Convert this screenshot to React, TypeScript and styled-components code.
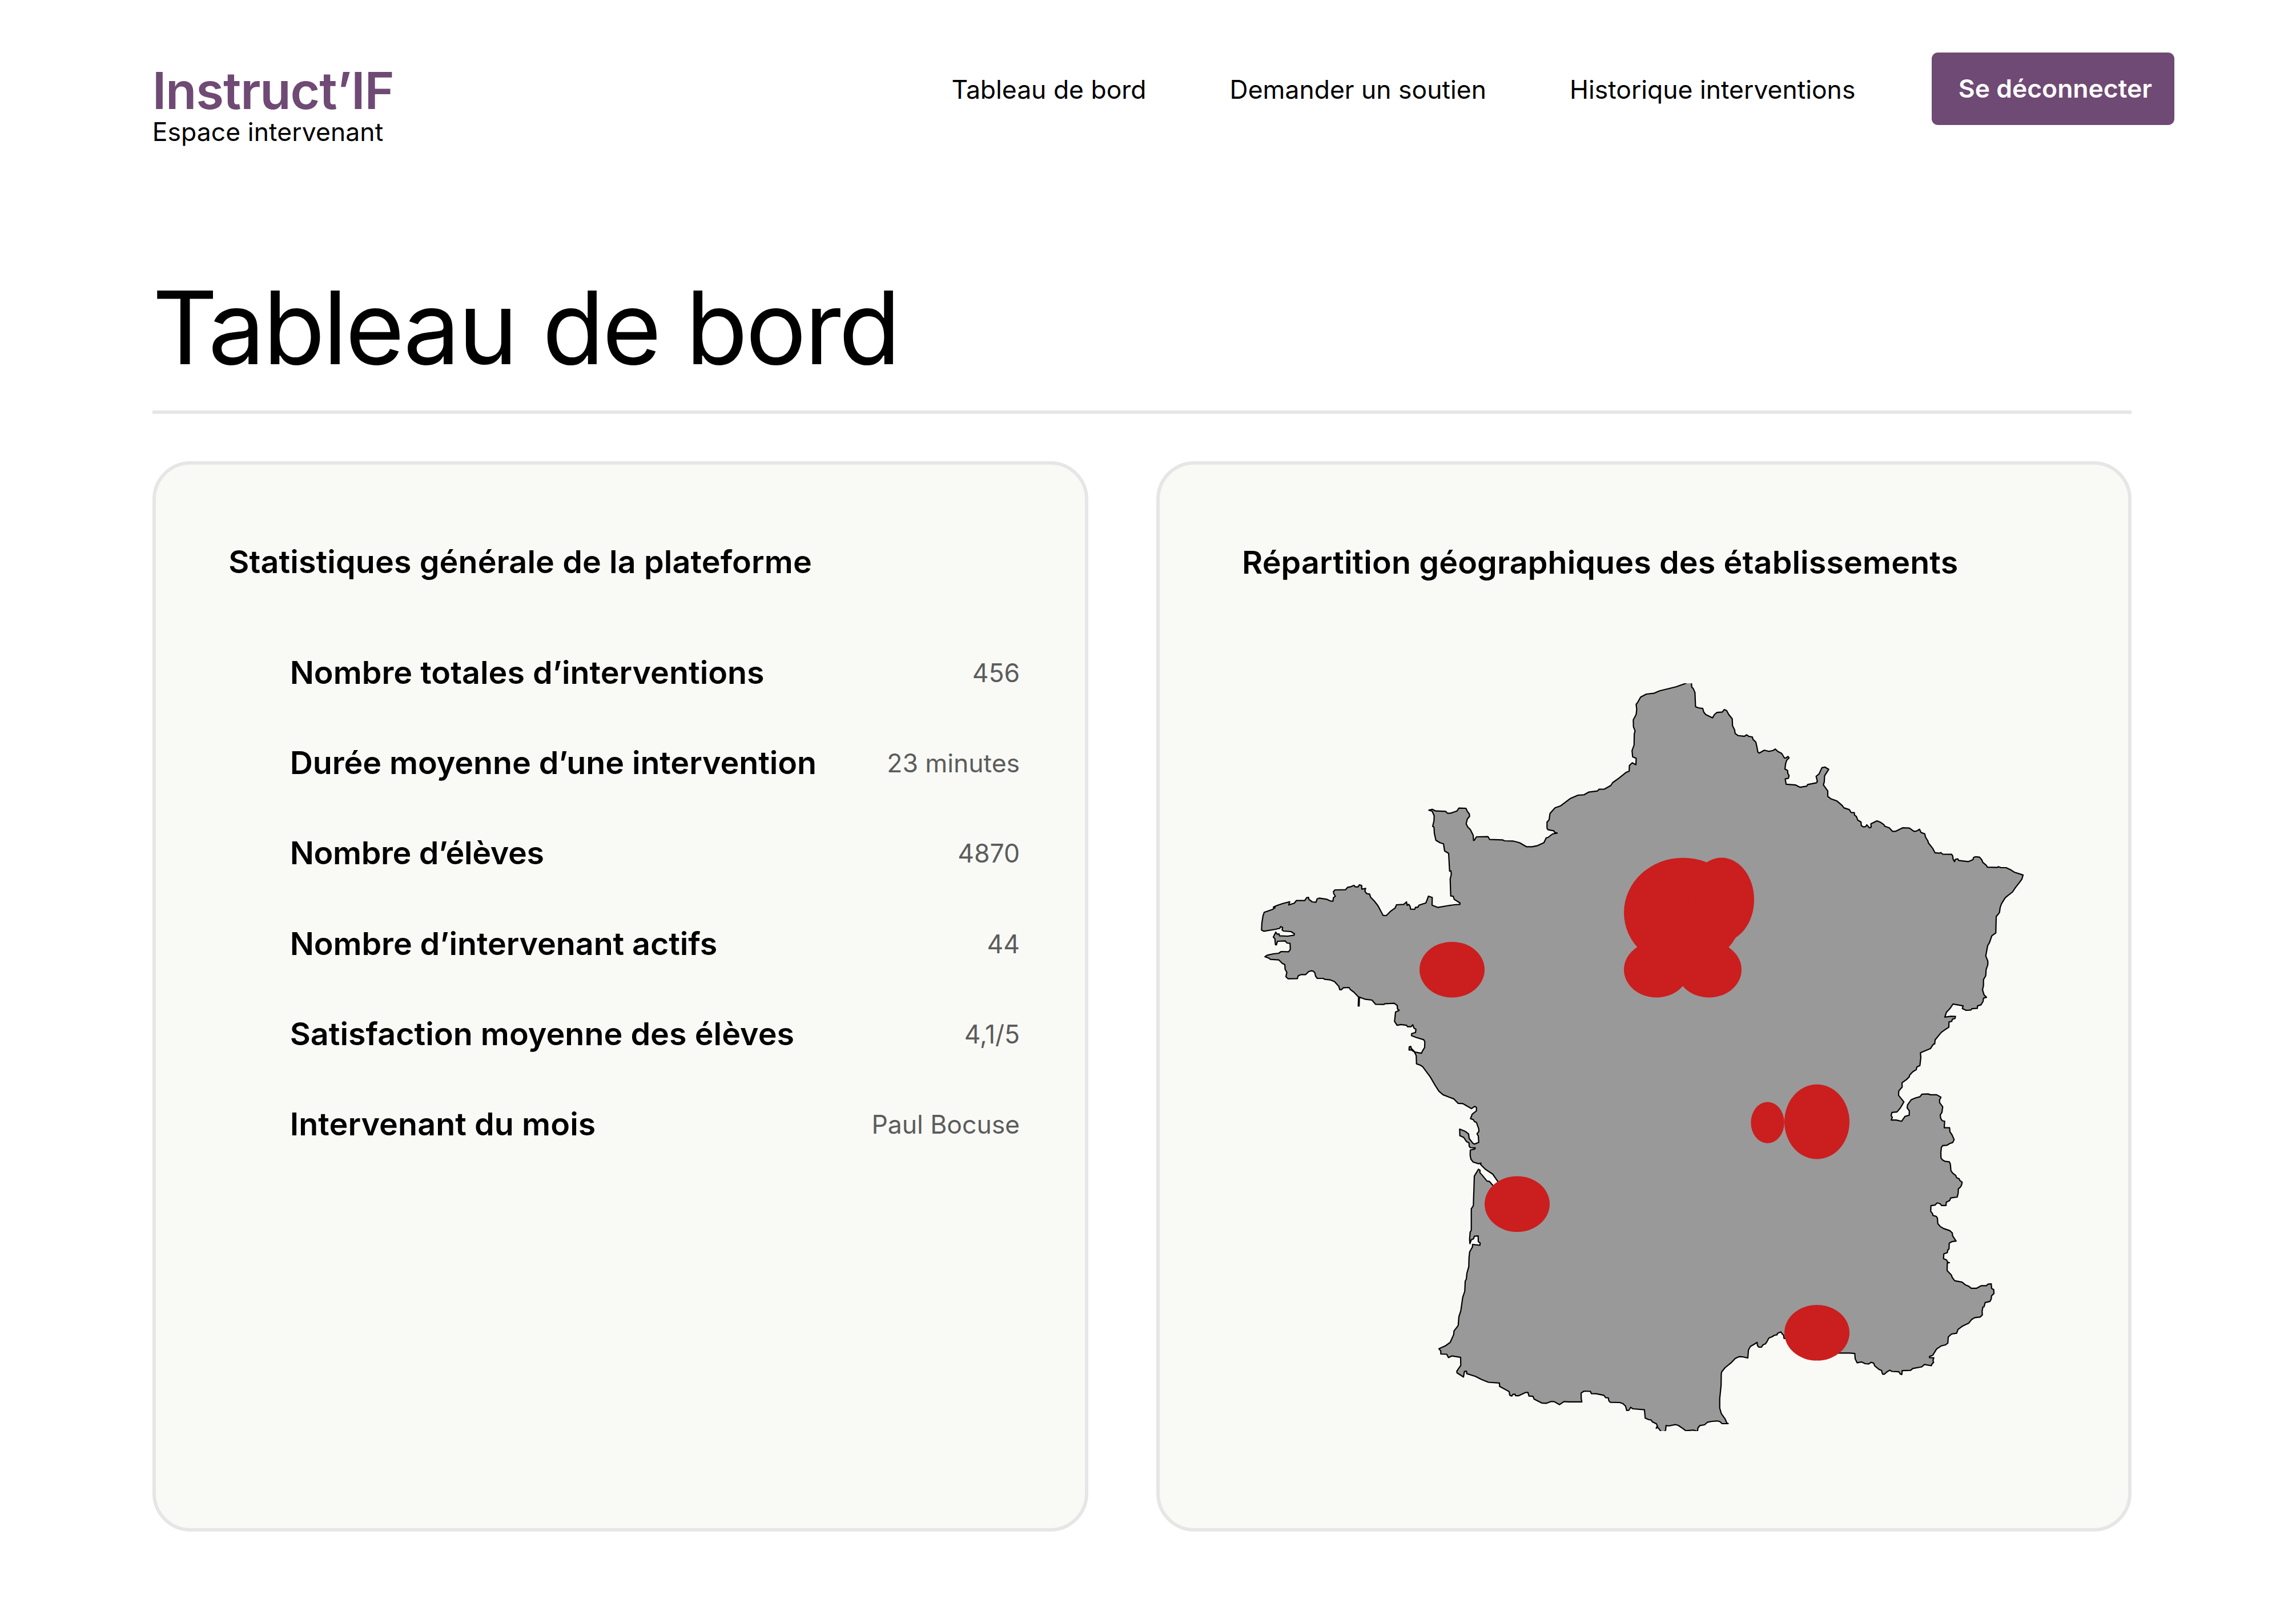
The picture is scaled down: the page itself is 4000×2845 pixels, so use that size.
import React from 'react';
import styled, { createGlobalStyle } from 'styled-components';

/* The layout is designed on a 1440-wide grid and scaled up to a 4000px page. */
const u = (n: number) => `${(n * 4000) / 1440}px`;

const color = {
  ink: '#000000',
  muted: '#5c5c5c',
  brand: '#6f4a74',
  line: '#e6e6e6',
  card: '#f9faf6',
  land: '#999999',
  spot: '#cb1e1e',
};

const GlobalStyle = createGlobalStyle`
  *, *::before, *::after { box-sizing: border-box; }
  body {
    margin: 0;
    background: #ffffff;
    color: ${color.ink};
    font-family: Inter, 'Liberation Sans', sans-serif;
  }
`;

const Page = styled.div`
  width: ${u(1440)};
  height: 2845px;
  overflow: hidden;
  background: #ffffff;
`;

const Header = styled.header`
  display: flex;
  justify-content: space-between;
  align-items: flex-start;
  height: ${u(130)};
  padding: ${u(33)} ${u(69)} 0 ${u(96)};
`;

const Brand = styled.div`
  display: flex;
  flex-direction: column;
  padding-top: 23.5px;
`;

const BrandName = styled.span`
  font-size: ${u(32)};
  line-height: ${u(32)};
  font-weight: 600;
  letter-spacing: -0.013em;
  color: ${color.brand};
`;

const BrandSpace = styled.span`
  font-size: ${u(16)};
  line-height: 55px;
  letter-spacing: 0.002em;
`;

const Nav = styled.nav`
  display: flex;
  align-items: center;
  height: ${u(46)};
  gap: 146px;
`;

const NavLink = styled.a`
  padding-top: 3px;
  font-size: ${u(16)};
  line-height: ${u(24)};
  color: ${color.ink};
  text-decoration: none;
  white-space: nowrap;
`;

const LogoutButton = styled.button`
  width: ${u(153)};
  height: ${u(46)};
  margin-left: -12px;
  padding: 0 0 0 7px;
  border: 0;
  border-radius: ${u(4)};
  background: ${color.brand};
  color: #ffffff;
  font: inherit;
  font-size: ${u(16)};
  font-weight: 600;
  line-height: ${u(24)};
  white-space: nowrap;
`;

const Main = styled.main`
  padding: 0 ${u(96)};
`;

const PageTitle = styled.h1`
  margin: 0;
  padding: 113px 0 45px;
  border-bottom: 6px solid ${color.line};
  font-size: ${u(64)};
  line-height: 200px;
  font-weight: 400;
  letter-spacing: -0.0215em;
`;

const Cards = styled.div`
  display: grid;
  grid-template-columns: ${u(590)} ${u(615)};
  column-gap: ${u(43)};
  margin-top: ${u(30)};
`;

const Card = styled.section<{ $top: number; $left: number }>`
  height: ${u(675)};
  padding: ${(p) => p.$top}px 0 0 ${(p) => p.$left}px;
  border: 6px solid ${color.line};
  border-radius: ${u(24)};
  background: ${color.card};
`;

const CardTitle = styled.h2`
  margin: 0;
  font-size: ${u(20)};
  line-height: ${u(30)};
  font-weight: 600;
  letter-spacing: 0.0025em;
  white-space: nowrap;
`;

const StatList = styled.dl`
  margin: 73px 113.5px 0 107.5px;
`;

const StatRow = styled.div`
  display: flex;
  justify-content: space-between;
  align-items: center;
  height: ${u(57)};
`;

const StatLabel = styled.dt<{ $tracking?: number }>`
  font-size: ${u(20)};
  line-height: ${u(30)};
  font-weight: 600;
  letter-spacing: ${(p) => p.$tracking ?? 0}em;
`;

const StatValue = styled.dd`
  margin: 0;
  padding-top: 3px;
  font-size: ${u(16)};
  line-height: ${u(24)};
  color: ${color.muted};
`;

const FranceMap = styled.svg`
  display: block;
  width: 1340px;
  height: 1310px;
  margin: 170.5px 0 0 31px;
`;

const Land = styled.path`
  fill: ${color.land};
  stroke: #000000;
  stroke-width: 2.2;
  stroke-linejoin: round;
`;

const Spot = styled.ellipse`
  fill: ${color.spot};
`;

const stats = [
  { label: 'Nombre totales d’interventions', value: '456', tracking: 0.0005 },
  { label: 'Durée moyenne d’une intervention', value: '23 minutes', tracking: -0.001 },
  { label: 'Nombre d’élèves', value: '4870', tracking: -0.006 },
  { label: 'Nombre d’intervenant actifs', value: '44', tracking: -0.001 },
  { label: 'Satisfaction moyenne des élèves', value: '4,1/5', tracking: 0.001 },
  { label: 'Intervenant du mois', value: 'Paul Bocuse', tracking: 0.002 },
];

/* Each stretch of the border has its own finer grid: origin, units per pixel, points. */
type Stretch = { origin: [number, number]; grid: [number, number]; points: string };

const border: Stretch[] = [
  {
    // Northern frontier, Dunkerque to the Rhine
    origin: [2800, 1160],
    grid: [1.96, 2.45],
    points:
      '300,86 318,86 319,107 324,113 330,130 332,191 342,196 357,199 360,214 367,225 390,239 397,225 405,216 424,214 431,203 439,208 446,225 458,243 459,273 466,290 468,306 478,315 500,318 508,312 515,319 527,321 529,331 539,343 543,365 546,386 551,390 568,378 584,383 598,379 606,373 614,383 628,392 637,411 642,411 650,405 653,411 645,421 641,438 639,459 648,465 649,478 653,487 651,498 640,501 643,524 675,527 691,537 714,532 717,525 747,518 750,511 746,490 756,480 766,453 776,450 789,460 775,488 774,513 771,527 786,553 786,576 796,586 818,596 836,616 841,625 860,633 866,645 877,646 878,657 884,662 889,678 900,686 901,701 908,707 916,706 920,698 929,711 935,708 934,694 955,681 968,688 979,698 981,704 997,711 1008,726 1019,726 1043,711 1066,712 1082,726 1091,725 1101,717 1106,731 1119,737 1122,752 1130,768 1131,775 1146,799 1154,818 1169,820 1174,817 1180,824 1211,825 1215,832 1216,845 1221,856 1224,846 1232,844 1235,851 1268,856 1284,848 1287,838 1294,835 1307,837 1315,849 1318,859 1330,872 1334,880 1368,881 1371,878 1381,882 1398,882 1415,892 1426,901',
  },
  {
    // Rhine, Jura and Lake Geneva
    origin: [3260, 1480],
    grid: [3, 2.8],
    points:
      '806,135 849,148 843,168 833,181 808,211 794,231 770,248 755,260 736,289 729,306 725,332 708,352 706,432 685,446 673,479 663,495 653,545 664,570 664,588 655,612 653,642 641,661 641,690 636,711 644,736 657,748 641,752 639,768 628,785 610,790 609,802 580,804 575,810 550,812 530,803 534,790 481,781 465,803 446,822 438,845 470,841 494,842 491,852 478,855 474,866 460,869 459,895 443,904 419,920 387,957 385,976 377,979 362,1000 310,1020 312,1042 307,1083 291,1090 288,1103 270,1113 253,1130 251,1138 237,1151 213,1167 214,1188 196,1208 195,1229 223,1261 205,1290 187,1310 160,1313 156,1328 162,1337 157,1350 182,1350 211,1356 229,1332 251,1326 251,1304 240,1291 242,1276 262,1250 285,1241 307,1236 318,1223 350,1222 362,1226 395,1226 418,1238 410,1252 411,1265 427,1285 423,1312 414,1325 416,1341 424,1353 437,1356 435,1388 463,1388 465,1408 475,1421 487,1446 480,1460 464,1465 449,1474',
  },
  {
    // Alps and Côte d'Azur
    origin: [3240, 1900],
    grid: [3, 2.9037],
    points:
      '508,309 487,310 480,320 477,345 478,374 487,384 498,390 522,393 527,405 530,438 540,451 555,462 560,474 573,479 577,488 589,496 587,507 582,519 569,531 568,553 563,572 529,577 523,590 506,598 504,615 481,615 473,606 458,602 446,613 425,616 424,645 433,655 436,666 452,670 459,679 461,707 474,722 491,732 524,743 537,754 539,770 557,796 535,799 521,807 520,836 514,841 511,855 493,861 491,886 507,892 513,904 522,906 511,908 510,946 533,970 536,980 550,998 589,1005 606,1019 624,1026 637,1036 665,1036 690,1023 717,1023 724,1015 742,1014 744,1037 755,1043 756,1063 743,1075 742,1090 735,1103 710,1109 704,1130 698,1132 694,1152 695,1172 685,1182 655,1186 639,1195 623,1214 592,1228 567,1246 560,1265 533,1269 516,1284 514,1315 502,1324 480,1329 455,1345 435,1376 417,1384 418,1389 440,1390 436,1402 439,1414 432,1419 427,1430 391,1424 377,1436 330,1444 318,1454 274,1455 272,1475 265,1473 256,1461 220,1459 209,1453 194,1461 181,1473 171,1473 165,1454 152,1449 130,1431 124,1417 111,1413 98,1421 80,1420 61,1411 37,1415 27,1395 25,1368 0,1366',
  },
  {
    // Golfe du Lion and eastern Pyrenees
    origin: [2780, 2240],
    grid: [2.9037, 3],
    points:
      '1270,391 1165,391 1060,370 1010,315 1000,314 998,298 990,289 984,280 967,287 965,295 952,297 938,306 923,312 912,333 905,343 894,347 885,360 872,360 865,352 863,335 843,348 829,356 819,375 816,417 790,411 771,410 752,419 730,443 700,468 684,488 681,498 680,560 673,630 673,680 681,709 700,737 710,760 716,762 685,762 673,751 660,748 633,750 610,755 596,768 572,772 562,785 560,803 540,796 500,799 485,787 462,771 448,767 414,774 400,772 398,795 393,804 375,804 358,781 350,786 356,775 351,763 331,753 324,743 312,741 294,733 290,689 231,684 220,676 212,691 200,693 194,670 181,657 165,651 117,650 109,641 107,627 93,625 84,613 45,605 20,604 15,592',
  },
  {
    // Pyrenees and Atlantic coast up to the Loire
    origin: [2440, 1740],
    grid: [3, 2.0632],
    points:
      '1035,1439 1003,1438 987,1445 988,1466 991,1477 920,1477 897,1476 874,1487 845,1476 827,1476 805,1482 780,1481 740,1467 734,1457 713,1456 708,1443 695,1443 658,1455 643,1455 640,1449 628,1450 623,1456 612,1453 609,1440 559,1421 558,1409 500,1406 463,1396 432,1385 386,1375 385,1366 374,1367 369,1387 335,1372 334,1366 355,1345 354,1316 308,1311 290,1317 281,1305 250,1304 250,1293 240,1285 275,1274 299,1262 318,1233 319,1221 341,1201 345,1169 355,1148 365,1099 376,1077 378,1041 384,1033 387,1012 397,988 398,955 402,934 416,917 417,908 455,911 457,903 447,898 446,877 426,878 422,887 410,891 403,905 401,890 404,863 410,857 410,779 421,768 426,661 448,636 456,640 455,648 470,660 493,679 505,680 523,694 560,710 600,720 570,700 551,682 523,654 485,637 459,619 461,614 448,616 420,610 408,600 404,585 405,567 428,563 431,559 405,558 399,553 398,541 385,536 370,521 350,515 349,491 380,500 396,509 399,525 418,542 427,545 449,539 447,516 440,508 450,500 449,490 437,467 427,464 421,457 406,453 415,437 437,425 437,413 428,409 411,417 378,404 366,399 341,398 318,382 262,367 240,354 221,334 195,303 155,266 142,260 122,255 121,226 112,213 95,205 83,205 84,194 92,192 95,200 115,213 148,217 155,207 165,196 166,175 160,168 121,160 96,153 97,146 117,142 119,130 109,126 103,114 94,121 75,121 70,116 41,113 20,116 7,102 12,68 31,62 22,56 21,44 8,38',
  },
  {
    // Brittany and Cotentin
    origin: [2180, 1380],
    grid: [3, 3],
    points:
      '787,1133 735,1135 732,1139 687,1138 668,1116 630,1111 602,1100 601,1147 596,1147 598,1100 573,1074 554,1060 548,1050 518,1051 507,1062 499,1061 494,1044 472,1019 450,1010 421,1007 412,1002 381,1002 372,990 368,973 360,964 348,962 335,967 320,982 297,982 281,988 276,1003 228,1004 216,993 221,970 212,955 210,929 198,924 179,905 134,902 128,896 106,888 118,880 150,873 178,870 191,861 230,862 239,850 238,818 222,816 212,805 172,807 166,826 161,825 158,793 150,785 163,759 170,770 180,768 182,778 225,780 259,775 261,768 243,756 203,753 196,747 199,734 188,730 184,739 161,744 100,754 88,748 90,710 96,672 102,655 145,640 159,630 150,628 165,620 200,608 236,599 231,616 260,607 271,593 315,593 325,578 335,576 337,587 355,600 374,602 380,584 392,580 430,586 449,595 463,596 466,578 476,570 468,558 466,545 474,537 529,536 541,523 558,520 574,513 580,521 595,521 602,510 614,514 615,533 635,529 631,543 640,556 656,559 661,575 680,595 700,620 727,671 743,672 765,650 790,632 797,615 835,613 850,600 853,618 862,613 869,624 871,638 893,639 897,628 910,628 915,617 952,605 965,570 985,577 984,617 1015,629 1060,621 1100,615 1130,613 1131,606 1100,586 1095,570 1082,569 1079,480 1085,455 1083,437 1076,438 1071,345 1050,332 1044,295 1025,289 1004,276 996,240 994,206 987,203 994,175 995,148 985,124 967,118 985,113 1003,122 1055,124 1065,134 1080,134 1115,122 1125,107 1162,108 1169,124 1180,138 1181,150 1169,165 1163,190 1172,207 1185,220 1200,250 1202,277 1206,276 1217,258 1278,257',
  },
  {
    // Normandy and the Channel coast
    origin: [2460, 1160],
    grid: [2.8, 3],
    points:
      '417,932 480,934 490,939 530,940 550,945 563,949 597,970 625,970 652,964 683,949 694,923 703,921 725,903 748,898 737,896 731,886 703,881 698,873 698,841 708,829 713,795 737,766 765,755 813,716 850,699 880,697 902,683 945,677 953,668 980,667 1011,648 1020,633 1050,610 1085,580 1101,573 1102,543 1116,529 1134,539 1135,505 1118,498 1115,465 1125,435 1126,376 1130,362 1122,340 1121,303 1135,275 1138,249 1135,222 1142,212 1157,184 1185,168 1224,163 1250,151 1330,130 1380,111',
  },
];

const landPath = `M${border
  .flatMap(({ origin, grid, points }) =>
    points.split(' ').map((pair) => {
      const [x, y] = pair.split(',').map(Number);
      return `${(origin[0] + x / grid[0]).toFixed(1)} ${(origin[1] + y / grid[1]).toFixed(1)}`;
    }),
  )
  .join('L')}Z`;

const spots = [
  { cx: 2543, cy: 1698.7, rx: 57, ry: 48.8 },
  { cx: 2947.5, cy: 1598.7, rx: 103.5, ry: 96 },
  { cx: 3015, cy: 1576.2, rx: 57, ry: 73.6 },
  { cx: 2901, cy: 1698.7, rx: 57, ry: 48.8 },
  { cx: 2993, cy: 1698.7, rx: 57, ry: 48.8 },
  { cx: 3182, cy: 1965.2, rx: 57, ry: 65.4 },
  { cx: 3095.6, cy: 1966.6, rx: 29.2, ry: 36.2 },
  { cx: 2657, cy: 2109.3, rx: 57, ry: 48.8 },
  { cx: 3182, cy: 2334.8, rx: 57, ry: 48.8 },
];

export default function App() {
  return (
    <Page>
      <GlobalStyle />
      <Header>
        <Brand>
          <BrandName>Instruct’IF</BrandName>
          <BrandSpace>Espace intervenant</BrandSpace>
        </Brand>
        <Nav>
          <NavLink>Tableau de bord</NavLink>
          <NavLink>Demander un soutien</NavLink>
          <NavLink>Historique interventions</NavLink>
          <LogoutButton>Se déconnecter</LogoutButton>
        </Nav>
      </Header>
      <Main>
        <PageTitle>Tableau de bord</PageTitle>
        <Cards>
          <Card $top={127.5} $left={127.5}>
            <CardTitle>Statistiques générale de la plateforme</CardTitle>
            <StatList>
              {stats.map((s) => (
                <StatRow key={s.label}>
                  <StatLabel $tracking={s.tracking}>{s.label}</StatLabel>
                  <StatValue>{s.value}</StatValue>
                </StatRow>
              ))}
            </StatList>
          </Card>
          <Card $top={129} $left={144}>
            <CardTitle>Répartition géographiques des établissements</CardTitle>
            <FranceMap viewBox="2206 1197 1340 1310">
              <Land d={landPath} />
              {spots.map((s, i) => (
                <Spot key={i} {...s} />
              ))}
            </FranceMap>
          </Card>
        </Cards>
      </Main>
    </Page>
  );
}
